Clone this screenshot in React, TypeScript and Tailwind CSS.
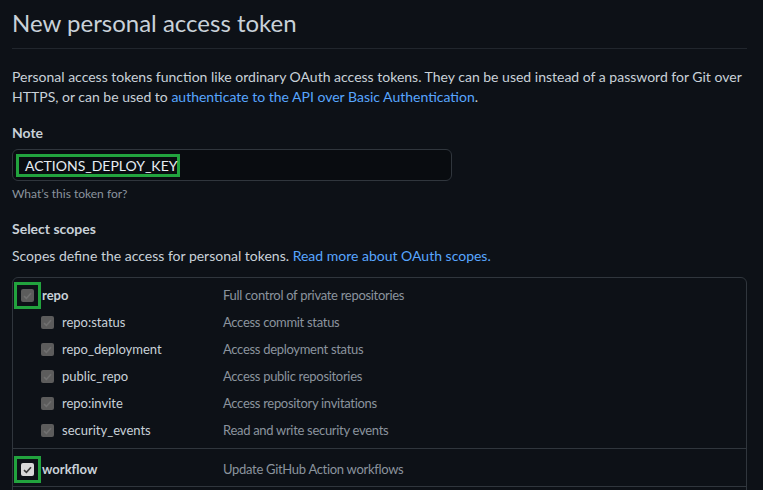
import React from "react";

type Scope = {
    name: string;
    description: string;
    sub?: boolean;
};

const REPO_SCOPES: Scope[] = [
    { name: "repo", description: "Full control of private repositories" },
    { name: "repo:status", description: "Access commit status", sub: true },
    { name: "repo_deployment", description: "Access deployment status", sub: true },
    { name: "public_repo", description: "Access public repositories", sub: true },
    { name: "repo:invite", description: "Access repository invitations", sub: true },
    { name: "security_events", description: "Read and write security events", sub: true },
];

function Checkbox({ light, highlight }: { light?: boolean; highlight?: boolean }) {
    return (
        <span
            className={`relative flex h-[13px] w-[13px] shrink-0 items-center justify-center rounded-[2px] ${
                light ? "bg-[#d8d8d8]" : "bg-[#5c5c5c]"
            }`}
        >
            <svg width="9" height="8" viewBox="0 0 9 8" fill="none">
                <path
                    d="M1 4.2 L3.4 6.4 L8 1.2"
                    stroke={light ? "#3a3a3a" : "#707070"}
                    strokeWidth="1.6"
                />
            </svg>
            {/* annotation box */}
            {highlight && <span className="absolute -inset-[7px] border-[3px] border-[#22a33e]" />}
        </span>
    );
}

function ScopeRow({ scope, highlight, light }: { scope: Scope; highlight?: boolean; light?: boolean }) {
    return (
        <div className="flex h-[27px] items-center">
            <div className={`flex w-[202px] items-center gap-2 ${scope.sub ? "pl-5" : ""}`}>
                <Checkbox light={light} highlight={highlight} />
                <span
                    className={
                        scope.sub
                            ? "text-[13px] text-[#c9d1d9]"
                            : "text-[13px] font-bold text-[#c9d1d9]"
                    }
                >
                    {scope.name}
                </span>
            </div>
            <span className="text-[13px] tracking-[-0.3px] text-[#8b949e]">{scope.description}</span>
        </div>
    );
}

export default function App() {
    return (
        <div
            className="h-screen overflow-hidden bg-[#0d1117] px-3 text-[#c9d1d9]"
            style={{ fontFamily: 'Lato, "Liberation Sans", sans-serif' }}
        >
            <div className="w-[735px]">
                {/* Header */}
                <h1 className="border-b border-[#21262d] pt-[7px] pb-[9px] text-[24px] leading-[32px] font-normal">
                    New personal access token
                </h1>

                <p className="mt-[18px] text-[14px] leading-[20px]">
                    Personal access tokens function like ordinary OAuth access tokens. They can be used
                    instead of a password for Git over HTTPS, or can be used to{" "}
                    <a className="text-[#58a6ff]">authenticate to the API over Basic Authentication</a>.
                </p>

                {/* Note */}
                <div className="mt-4">
                    <label className="block text-[14px] leading-[20px] font-bold">Note</label>
                    <div className="mt-[6px] flex h-[32px] w-[440px] items-center rounded-md border border-[#30363d] bg-[#090c10] pl-[3px]">
                        <span className="inline-flex h-[23px] w-[164px] items-center border-[3px] border-[#22a33e] pl-[6px] text-[14px] text-[#e6edf3]">
                            ACTIONS_DEPLOY_KEY
                        </span>
                    </div>
                    <p className="mt-[6px] text-[12px] leading-[14px] text-[#8b949e]">What’s this token for?</p>
                </div>

                {/* Scopes */}
                <div className="mt-[18px]">
                    <h2 className="text-[14px] leading-[20px] font-bold">Select scopes</h2>
                    <p className="mt-[7px] text-[14px] leading-[20px]">
                        Scopes define the access for personal tokens.{" "}
                        <a className="text-[#58a6ff]">Read more about OAuth scopes.</a>
                    </p>

                    <div className="mt-[11px] rounded-t-md border border-[#30363d]">
                        <div className="px-2 pt-[4px] pb-[4px]">
                            {REPO_SCOPES.map((scope, i) => (
                                <ScopeRow key={scope.name} scope={scope} highlight={i === 0} />
                            ))}
                        </div>
                        <div className="border-t border-[#30363d] px-2 pt-[7px] pb-[3px]">
                            <ScopeRow
                                scope={{ name: "workflow", description: "Update GitHub Action workflows" }}
                                highlight
                                light
                            />
                        </div>
                        <div className="h-[20px] border-t border-[#30363d]" />
                    </div>
                </div>
            </div>
        </div>
    );
}
